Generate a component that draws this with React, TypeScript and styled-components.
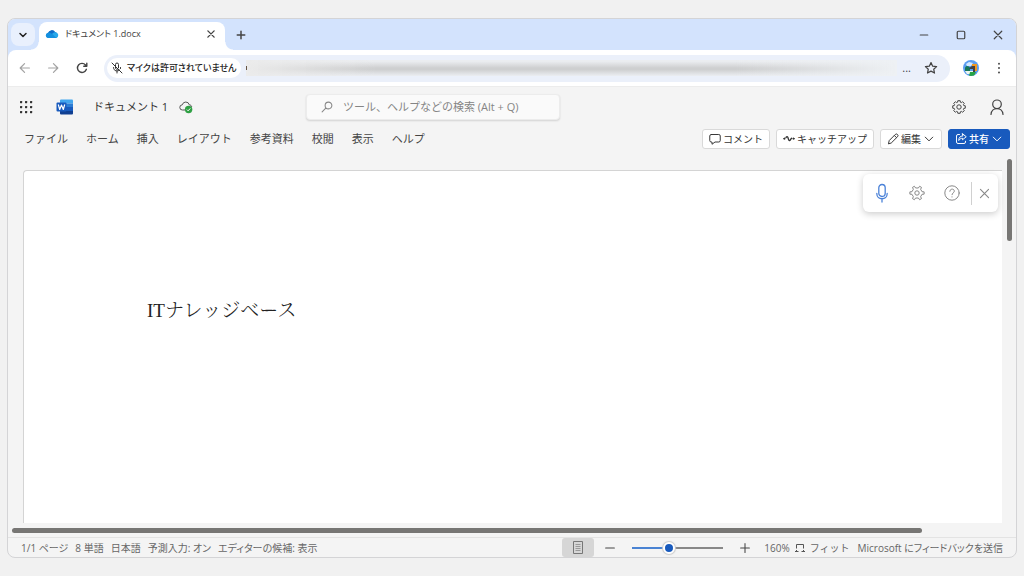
import React, { useState } from 'react';
import styled, { createGlobalStyle } from 'styled-components';

const GlobalStyle = createGlobalStyle`
  *, *::before, *::after { box-sizing: border-box; }
  body {
    margin: 0;
    background: #f1f1f1;
    font-family: "Open Sans", "Noto Sans CJK JP", sans-serif;
    font-size: 11px;
    line-height: 16px;
    color: #444;
  }
  button, input { font: inherit; color: inherit; }
`;

const Desktop = styled.div`
  min-height: 100vh;
  padding: 18px 7px;
  display: flex;
`;

const BrowserWindow = styled.div`
  flex: 1;
  min-width: 0;
  display: flex;
  flex-direction: column;
  border: 1px solid #d4d4d6;
  border-radius: 8px;
  overflow: hidden;
  background: #f4f4f4;
`;

const TitleBar = styled.header`
  height: 31px;
  display: flex;
  align-items: center;
  padding-left: 3px;
  background: #d3e3fd;
`;

const PlainButton = styled.button<{ $w?: number }>`
  width: ${(p) => p.$w ?? 24}px;
  height: 24px;
  padding: 0;
  border: 0;
  background: none;
  display: flex;
  flex: none;
  align-items: center;
  justify-content: center;
  color: #444;

  &:disabled { color: #a3a3a3; }
`;

const TabSearchButton = styled(PlainButton)`
  background: #e9f0fd;
  border-radius: 8px;
  height: 23px;
  color: #222;
`;

const Tab = styled.div`
  position: relative;
  align-self: flex-end;
  width: 186px;
  height: 28px;
  margin-left: 4px;
  padding: 0 2px 4px 6px;
  display: flex;
  align-items: center;
  gap: 6px;
  background: #fff;
  border-radius: 8px 8px 0 0;

  &::before, &::after {
    content: "";
    position: absolute;
    bottom: 0;
    width: 8px;
    height: 8px;
  }
  &::before {
    left: -8px;
    background: radial-gradient(circle at 0 0, transparent 7px, #fff 8px);
  }
  &::after {
    right: -8px;
    background: radial-gradient(circle at 100% 0, transparent 7px, #fff 8px);
  }
`;

const TabTitle = styled.span`
  flex: 1;
  font-size: 9px;
  font-feature-settings: "palt";
  white-space: nowrap;
`;

const WindowControls = styled.div`
  margin-left: auto;
  display: flex;
`;

const NavBarBacking = styled.div`
  background: #d3e3fd;
`;

const NavBar = styled.div`
  height: 37px;
  display: flex;
  align-items: center;
  padding: 0 1px 0 2px;
  background: #fff;
  border-bottom: 1px solid #ececec;
  border-radius: 8px 8px 0 0;
`;

const AddressBar = styled.div`
  flex: 1;
  min-width: 0;
  height: 27px;
  margin: 0 9px 0 8px;
  padding: 0 7px 0 3px;
  display: flex;
  align-items: center;
  gap: 5px;
  border-radius: 14px;
  background: #ebf0fa;
`;

const AddressMore = styled.span`
  margin-right: 3px;
`;

const PermissionChip = styled.button`
  height: 20px;
  padding: 0 4px;
  display: flex;
  align-items: center;
  gap: 4px;
  border: 0;
  border-radius: 10px;
  background: #fff;
  color: #222;
  font-size: 9px;
  font-weight: 500;
  font-feature-settings: "palt";
  white-space: nowrap;
`;

const HiddenAddress = styled.div`
  flex: 1;
  height: 16px;
  display: flex;
  align-items: center;
  background:
    linear-gradient(90deg, #ebebeb, transparent 20%, transparent 75%, #eef1f4),
    linear-gradient(#ebedf0 8%, #cecfd0 50%, #cecfd0 60%, #ebeef2);
`;

const AddressDot = styled.span`
  width: 1px;
  height: 4px;
  background: #654;
`;

const AppHeader = styled.div`
  height: 39px;
  display: grid;
  grid-template-columns: 298px minmax(120px, 254px) 1fr;
  align-items: center;
  padding-right: 7px;
`;

const HeaderGroup = styled.div<{ $end?: boolean }>`
  display: flex;
  align-items: center;
  justify-content: ${(p) => (p.$end ? 'flex-end' : 'flex-start')};
  gap: ${(p) => (p.$end ? 14 : 0)}px;
  padding-left: 6px;
`;

const WordMark = styled.span`
  margin: 0 20px 0 18px;
  display: flex;
`;

const DocTitle = styled.h1`
  margin: 0 6px 0 0;
  font-size: 11px;
  font-weight: 400;
  color: #333;
`;

const SearchBox = styled.label`
  height: 26px;
  display: flex;
  align-items: center;
  gap: 10px;
  padding: 0 14px;
  border-radius: 4px;
  border: 1px solid #ececec;
  background: #fafafa;
  box-shadow: 0 1px 2px rgba(0, 0, 0, 0.14);
  color: #888;
`;

const SearchInput = styled.input`
  flex: 1;
  min-width: 0;
  padding: 0;
  border: 0;
  outline: 0;
  background: none;
  &::placeholder { color: #858585; opacity: 1; }
`;

const RibbonRow = styled.div`
  height: 26px;
  display: flex;
  align-items: center;
  justify-content: space-between;
  padding: 0 6px 0 16px;
`;

const RibbonTabs = styled.nav`
  display: flex;
  gap: 18px;
`;

const RibbonTab = styled.button`
  padding: 0;
  border: 0;
  background: none;
  white-space: nowrap;
`;

const ActionGroup = styled.div`
  display: flex;
  gap: 6px;
`;

const ActionButton = styled.button<{ $primary?: boolean }>`
  height: 20px;
  padding: 0 6px;
  display: flex;
  align-items: center;
  gap: 2px;
  border: 1px solid ${(p) => (p.$primary ? '#185abd' : '#d9d9d9')};
  border-radius: 3px;
  background: ${(p) => (p.$primary ? '#185abd' : '#fff')};
  color: ${(p) => (p.$primary ? '#fff' : '#333')};
  font-size: 10px;
  font-weight: ${(p) => (p.$primary ? 500 : 400)};
  white-space: nowrap;
`;

const Workspace = styled.main`
  flex: 1;
  display: flex;
  padding: 18px 4px 4px 15px;
`;

const Page = styled.article`
  position: relative;
  flex: 1;
  padding: 126px 124px 24px 123px;
  background: #fff;
  border-top: 1px solid #d4d4d4;
  border-left: 1px solid #d4d4d4;
  border-top-left-radius: 4px;
`;

const Paragraph = styled.p`
  margin: 0;
  font-family: "Liberation Serif", "Noto Serif CJK JP", "Noto Sans CJK JP", serif;
  font-size: 19px;
  font-weight: 300;
  line-height: 28px;
  color: #222;
`;

const DictationBar = styled.div`
  position: absolute;
  top: 3px;
  right: 4px;
  height: 38px;
  padding: 0 2px 0 7px;
  display: flex;
  align-items: center;
  gap: 11px;
  border-radius: 6px;
  background: #fff;
  box-shadow: 0 2px 7px rgba(0, 0, 0, 0.2);

  button { color: #888; }
`;

const DictationClose = styled.div`
  margin-left: -4px;
  height: 23px;
  display: flex;
  align-items: center;
  border-left: 1px solid #d0d0d0;
`;

const VerticalTrack = styled.div`
  width: 10px;
  flex: none;
  display: flex;
  justify-content: flex-end;
`;

const VerticalThumb = styled.div`
  width: 5px;
  height: 82px;
  margin-top: -11px;
  border-radius: 3px;
  background: #777674;
`;

const HorizontalTrack = styled.div`
  padding: 1px 4px 4px 4px;
`;

const HorizontalThumb = styled.div`
  width: 91%;
  height: 5px;
  border-radius: 3px;
  background: #777674;
`;

const StatusBar = styled.footer`
  height: 20px;
  display: flex;
  align-items: center;
  justify-content: space-between;
  padding: 0 13px;
  border-top: 1px solid #e3e3e3;
  font-size: 10px;
  color: #666;
`;

const StatusGroup = styled.div<{ $gap: number }>`
  display: flex;
  align-items: center;
  gap: ${(p) => p.$gap}px;
`;

const StatusButton = styled.button`
  padding: 0;
  display: flex;
  align-items: center;
  gap: 5px;
  border: 0;
  background: none;
  font-feature-settings: "palt";
  white-space: nowrap;
`;

const ZoomButton = styled(StatusButton)`
  margin-left: 3px;
  font-feature-settings: normal;
`;

const ViewButton = styled.button`
  width: 32px;
  height: 19px;
  padding: 0;
  display: flex;
  align-items: center;
  justify-content: center;
  border: 0;
  border-radius: 3px;
  background: #d6d6d6;
`;

const ZoomSlider = styled.input<{ $fill: number }>`
  appearance: none;
  width: 91px;
  height: 14px;
  margin: 0 6px;
  background: linear-gradient(90deg, #4a83d3 ${(p) => p.$fill}%, #888 ${(p) => p.$fill}%) center / 100% 2px no-repeat;
  &::-webkit-slider-thumb {
    appearance: none;
    width: 12px;
    height: 12px;
    border-radius: 50%;
    border: 2px solid #fff;
    background: #185abd;
    box-shadow: 0 0 1px 1px #ccc;
  }
`;

interface StrokeProps {
  d: string;
  size?: number;
  width?: number;
}

const Stroke = ({ d, size = 16, width = 1 }: StrokeProps) => (
  <svg width={size} height={size} viewBox="0 0 16 16" fill="none" stroke="currentColor" strokeWidth={width} strokeLinecap="round" strokeLinejoin="round" aria-hidden>
    <path d={d} />
  </svg>
);

const chevron = 'M4 6l4 4 4-4';
const smallChevron = 'M3 5.500l5 5 5-5';
const cross = 'M3 3l10 10M13 3L3 13';

const gearPath = (teeth: number, outer: number, inner: number, top: number, base: number) => {
  const points: string[] = [];
  const step = (Math.PI * 2) / teeth;
  const at = (angle: number, r: number) =>
    `${(8 + r * Math.cos(angle)).toFixed(2)} ${(8 + r * Math.sin(angle)).toFixed(2)}`;
  for (let i = 0; i < teeth; i += 1) {
    const a = i * step;
    points.push(at(a - step * base, inner), at(a - step * top, outer), at(a + step * top, outer), at(a + step * base, inner));
  }
  return `M${points.join('L')}Z`;
};

const Gear = ({ teeth }: { teeth: number }) => (
  <svg width="16" height="16" viewBox="0 0 16 16" fill="none" stroke="currentColor" strokeLinejoin="round" aria-hidden>
    <path d={teeth === 8 ? gearPath(8, 6.4, 5, 0.24, 0.36) : gearPath(6, 7.2, 5.2, 0.15, 0.24)} />
    <circle cx="8" cy="8" r="2.2" />
  </svg>
);

const OneDriveIcon = () => (
  <svg width="14" height="10" viewBox="0 0 14 10" aria-hidden>
    <path d="M3 4a4 4 0 0 1 7.2-1.100A3.400 3.400 0 0 1 11 9H3.200A2.600 2.600 0 0 1 3 4z" fill="#0f6cc8" />
    <path d="M2.900 3.700C4.500 3.300 5.800 4 7 5l4.500 4H3A2.700 2.700 0 0 1 2.900 3.700z" fill="#1490df" />
    <path d="M7 5.100c1.500-2 4-2.300 5.200-1A2.800 2.800 0 0 1 11.200 9z" fill="#28a8ea" />
  </svg>
);

const WordIcon = () => (
  <svg width="17" height="16" viewBox="0 0 17 16" aria-hidden>
    <path d="M5 .5h11a1 1 0 0 1 1 1V4.500H4v-3a1 1 0 0 1 1-1z" fill="#41a5ee" />
    <path d="M4 4.500h13V8H4z" fill="#2b7cd3" />
    <path d="M4 8h13v4H4z" fill="#185abd" />
    <path d="M4 12h13v2.500a1 1 0 0 1-1 1H5a1 1 0 0 1-1-1z" fill="#103f91" />
    <rect x="0.500" y="3.500" width="10" height="9" rx="1" fill="#185abd" />
    <path d="M2.300 5.500l1.400 5L5.500 6l1.800 4.500 1.400-5" fill="none" stroke="#fff" strokeWidth="1.200" strokeLinejoin="round" />
  </svg>
);

const CloudSavedIcon = () => (
  <svg width="14" height="14" viewBox="0 0 14 14" aria-hidden>
    <path d="M6 10H3.500a2.600 2.600 0 0 1-.2-5.200 3.600 3.600 0 0 1 7 0c1.500.1 2.300 1 2.400 2.200" fill="none" stroke="#555" />
    <circle cx="9.600" cy="9.500" r="3.700" fill="#2fa044" />
    <path d="M7.900 9.600l1.200 1.200 2.200-2.400" fill="none" stroke="#fff" />
  </svg>
);

const LauncherIcon = () => (
  <svg width="14" height="14" viewBox="0 0 14 14" fill="#333" aria-hidden>
    {[1, 6, 11].map((y) => [1, 6, 11].map((x) => <rect key={`${x}-${y}`} x={x} y={y} width="2.200" height="2.200" rx="0.6" />))}
  </svg>
);

const MicOffIcon = () => (
  <svg width="12" height="12" viewBox="0 0 12 12" fill="none" stroke="#333" strokeLinecap="round" aria-hidden>
    <path d="M1 1l10 10M4.500 4V2.500a1.500 1.500 0 0 1 3 0v3.300M4.500 4.500V6c0 1 1 1.500 1.800 1.400M2.500 5.500c0 4 4.500 4.200 5.800 2.600M9.500 5.500v1M6 9v2" />
  </svg>
);

const MicIcon = () => (
  <svg width="18" height="20" viewBox="0 0 18 20" fill="none" stroke="#4b82d8" strokeWidth="1.300" strokeLinecap="round" aria-hidden>
    <rect x="5.800" y="1.500" width="6.400" height="12" rx="3.200" />
    <path d="M3.800 10.500c0 7 10.400 7 10.400 0M9 16v3" />
  </svg>
);

const Avatar = () => (
  <svg width="16" height="16" viewBox="0 0 16 16" aria-hidden>
    <clipPath id="avatar-disc"><circle cx="8" cy="8" r="8" /></clipPath>
    <g clipPath="url(#avatar-disc)">
      <path d="M0 0h16v16H0z" fill="#5c9df0" />
      <path d="M3 4l3-2 4 1-2 3H4z" fill="#d4e8ff" />
      <path d="M2 8c1-3 4-2 5 0v3H2z" fill="#16785a" />
      <path d="M9 4h5v7h-2V6H9z" fill="#f29822" />
      <path d="M6 8l3-2h3v6h-2V9H7z" fill="#433f42" />
      <path d="M2 11h8v3H4z" fill="#eef5ee" />
      <path d="M7 12h6l-2 4H6z" fill="#27a345" />
    </g>
  </svg>
);

const StarIcon = () => (
  <Stroke size={14} width={1.4} d="M8 1.800l1.900 4.100 4.500.5-3.300 3 .9 4.400L8 11.600l-4 2.200.9-4.400-3.300-3 4.500-.5z" />
);

const HelpIcon = () => (
  <svg width="16" height="16" viewBox="0 0 16 16" fill="none" stroke="currentColor" strokeLinecap="round" aria-hidden>
    <circle cx="8" cy="8" r="7.200" />
    <path d="M5.800 6.300c0-3 4.600-2.900 4.500-.1C10.300 7.700 8 8 8 9.700M8 11.800v.2" />
  </svg>
);

const PageViewIcon = () => (
  <svg width="10" height="13" viewBox="0 0 10 13" fill="none" stroke="#777" aria-hidden>
    <path d="M.5.5h9v12h-9z" />
    <path d="M2.500 3.500h5M2.500 5.500h5M2.500 7.500h5M2.500 9.500h5" stroke="#999" />
  </svg>
);

const FitIcon = () => (
  <svg width="10" height="10" viewBox="0 0 10 10" fill="none" stroke="#555" aria-hidden>
    <path d="M1.500 5.500v-4h7v4M1.500 7v2M8.500 7v2M0 8.500h3.500M6.500 8.500H10" />
  </svg>
);

const ribbonTabs = ['ファイル', 'ホーム', '挿入', 'レイアウト', '参考資料', '校閲', '表示', 'ヘルプ'];
const statusItems = ['1/1 ページ', '8 単語', '日本語', '予測入力: オン', 'エディターの候補: 表示'];

export default function App() {
  const [zoom, setZoom] = useState(160);
  const fill = ((zoom - 10) / 390) * 100;

  return (
    <>
      <GlobalStyle />
      <Desktop>
        <BrowserWindow>
          <TitleBar>
            <TabSearchButton aria-label="タブを検索"><Stroke size={12} width={2} d={chevron} /></TabSearchButton>
            <Tab>
              <OneDriveIcon />
              <TabTitle>ドキュメント 1.docx</TabTitle>
              <PlainButton aria-label="タブを閉じる"><Stroke size={10} width={2.2} d={cross} /></PlainButton>
            </Tab>
            <PlainButton $w={32} aria-label="新しいタブ"><Stroke size={12} width={2} d="M8 3v10M3 8h10" /></PlainButton>
            <WindowControls>
              <PlainButton $w={37} aria-label="最小化"><Stroke size={12} width={1.6} d="M3 8h10" /></PlainButton>
              <PlainButton $w={37} aria-label="最大化"><Stroke size={12} width={1.6} d="M4.500 3h7A1.500 1.500 0 0 1 13 4.500v7a1.500 1.500 0 0 1-1.500 1.500h-7A1.500 1.500 0 0 1 3 11.500v-7A1.500 1.500 0 0 1 4.500 3z" /></PlainButton>
              <PlainButton $w={37} aria-label="閉じる"><Stroke size={12} width={1.6} d={cross} /></PlainButton>
            </WindowControls>
          </TitleBar>

          <NavBarBacking>
            <NavBar>
              <PlainButton $w={29} disabled aria-label="戻る"><Stroke size={14} width={1.4} d="M13 8H3M7.500 3L2.500 8l5 5" /></PlainButton>
              <PlainButton $w={28} disabled aria-label="進む"><Stroke size={14} width={1.4} d="M3 8h10M8.500 3l5 5-5 5" /></PlainButton>
              <PlainButton $w={29} aria-label="再読み込み"><Stroke size={14} width={1.600} d="M13 9.500A5.200 5.200 0 1 1 12 4.500L13.300 6M13.500 2.500V6H10" /></PlainButton>
              <AddressBar>
                <PermissionChip><MicOffIcon />マイクは許可されていません</PermissionChip>
                <HiddenAddress><AddressDot /></HiddenAddress>
                <AddressMore>...</AddressMore>
                <PlainButton aria-label="ブックマーク"><StarIcon /></PlainButton>
              </AddressBar>
              <PlainButton aria-label="プロフィール"><Avatar /></PlainButton>
              <PlainButton $w={32} aria-label="メニュー"><Stroke size={14} width={2.200} d="M8 3v.1M8 8v.1M8 13v.1" /></PlainButton>
            </NavBar>
          </NavBarBacking>

          <AppHeader>
            <HeaderGroup>
              <PlainButton aria-label="アプリ起動ツール"><LauncherIcon /></PlainButton>
              <WordMark><WordIcon /></WordMark>
              <DocTitle>ドキュメント 1</DocTitle>
              <PlainButton aria-label="保存済み"><CloudSavedIcon /></PlainButton>
            </HeaderGroup>
            <SearchBox>
              <Stroke size={12} width={1.4} d="M10 1.500a4.500 4.500 0 1 1 0 9 4.500 4.500 0 0 1 0-9zM6.700 9.300L1.500 14.500" />
              <SearchInput type="text" aria-label="検索" placeholder="ツール、ヘルプなどの検索 (Alt + Q)" />
            </SearchBox>
            <HeaderGroup $end>
              <PlainButton aria-label="設定"><Gear teeth={8} /></PlainButton>
              <PlainButton aria-label="アカウント"><Stroke width={1.2} d="M8 1a4.300 4.300 0 1 1 0 8.600A4.300 4.300 0 0 1 8 1zM2 15.500c.5-7.900 11.500-7.900 12 0" /></PlainButton>
            </HeaderGroup>
          </AppHeader>

          <RibbonRow>
            <RibbonTabs>
              {ribbonTabs.map((label) => <RibbonTab key={label}>{label}</RibbonTab>)}
            </RibbonTabs>
            <ActionGroup>
              <ActionButton><Stroke size={12} width={1.300} d="M3 2h10a2 2 0 0 1 2 2v6a2 2 0 0 1-2 2H8l-4 3v-3H3a2 2 0 0 1-2-2V4a2 2 0 0 1 2-2z" />コメント</ActionButton>
              <ActionButton><Stroke size={12} width={1.800} d="M1 7.500h1.500M2 7v1M4 6C5.500 4 6.500 5 7 7.500S9 11.500 10.500 8L11.500 7M14 7v1M13.500 7.500H15" />キャッチアップ</ActionButton>
              <ActionButton><Stroke size={12} width={1.300} d="M2 14l1-4L11 2a2 2 0 0 1 3 3L6 13zM10 3.500L12.500 6" />編集<Stroke size={12} width={1.300} d={smallChevron} /></ActionButton>
              <ActionButton $primary><Stroke size={12} width={1.300} d="M6 2H4a2 2 0 0 0-2 2v8a2 2 0 0 0 2 2h8a2 2 0 0 0 2-2v-1M10 1l5 4-5 4V7C8 7 6 8 5 10c0-4 2-6 5-6z" />共有<Stroke size={12} width={1.300} d={smallChevron} /></ActionButton>
            </ActionGroup>
          </RibbonRow>

          <Workspace>
            <Page>
              <Paragraph>ITナレッジベース</Paragraph>
              <DictationBar>
                <PlainButton aria-label="ディクテーション"><MicIcon /></PlainButton>
                <PlainButton aria-label="ディクテーションの設定"><Gear teeth={6} /></PlainButton>
                <PlainButton aria-label="ヘルプ"><HelpIcon /></PlainButton>
                <DictationClose>
                  <PlainButton aria-label="閉じる"><Stroke size={13} width={1.400} d={cross} /></PlainButton>
                </DictationClose>
              </DictationBar>
            </Page>
            <VerticalTrack><VerticalThumb /></VerticalTrack>
          </Workspace>
          <HorizontalTrack><HorizontalThumb /></HorizontalTrack>

          <StatusBar>
            <StatusGroup $gap={7}>
              {statusItems.map((label) => <StatusButton key={label}>{label}</StatusButton>)}
            </StatusGroup>
            <StatusGroup $gap={4}>
              <ViewButton aria-label="ページ表示"><PageViewIcon /></ViewButton>
              <PlainButton aria-label="縮小"><Stroke size={14} width={1.200} d="M3 8h10" /></PlainButton>
              <ZoomSlider type="range" min={10} max={400} value={zoom} $fill={fill} aria-label="ズーム" onChange={(e) => setZoom(Number(e.target.value))} />
              <PlainButton aria-label="拡大"><Stroke size={14} width={1.200} d="M8 3v10M3 8h10" /></PlainButton>
              <StatusGroup $gap={8}>
                <ZoomButton>{zoom}%<FitIcon />フィット</ZoomButton>
                <StatusButton>Microsoft にフィードバックを送信</StatusButton>
              </StatusGroup>
            </StatusGroup>
          </StatusBar>
        </BrowserWindow>
      </Desktop>
    </>
  );
}
